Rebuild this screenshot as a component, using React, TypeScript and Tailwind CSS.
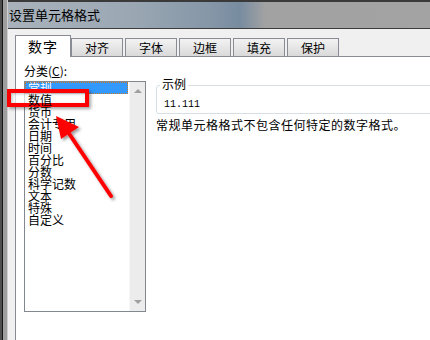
import React from "react";

const items = ["常规", "数值", "货币", "会计专用", "日期", "时间", "百分比", "分数", "科学记数", "文本", "特殊", "自定义"];
const tabs = ["对齐", "字体", "边框", "填充", "保护"];

export default function App() {
  return (
    <div className="relative w-[430px] h-[340px] overflow-hidden flex bg-[#f0f0f0] font-['Noto_Sans_CJK_SC',sans-serif] text-black">
      {/* left window frame */}
      <div className="flex h-full shrink-0">
        <div className="w-[2px] h-full bg-[#4e4e4e]" />
        <div className="w-[1px] h-full bg-[#141414]" />
        <div className="w-[4px] h-full bg-[#9e9e9e]" />
        <div className="w-[1px] h-full bg-[#cfcfcf]" />
      </div>
      <div className="flex-1 flex flex-col min-w-0">
        {/* title bar */}
        <div className="h-[29px] shrink-0 border-t-2 border-t-[#3a3a3a] border-b border-b-[#3c3c3c] bg-[linear-gradient(to_right,#a9b2bb_0%,#9aa7b3_30%,#8596a7_48%,#788ca0_55%,#a2a2a2_61%,#a3a3a3_100%)] flex items-center pl-[1px]">
          <span className="text-[13px] leading-[14px] mt-[-1px]">设置单元格格式</span>
        </div>
        {/* body */}
        <div className="flex-1 flex flex-col pl-[7px] pt-[6px] min-h-0">
          {/* tabs */}
          <div className="h-[21px] flex items-end shrink-0">
            <div className="relative z-10 w-[56px] h-[22px] -mb-[1px] bg-white border border-b-0 border-[#898c95] flex items-start justify-center pt-[3px]">
              <span className="text-[14px] leading-[15px] tracking-[1px]">数字</span>
            </div>
            {tabs.map((t, i) => (
              <div
                key={t}
                className={`${i === 0 ? "ml-[0px]" : "ml-[2px]"} w-[52px] h-[18px] border border-b-0 border-[#898c95] bg-[linear-gradient(to_bottom,#f3f3f3,#e6e6e6_50%,#d9d9d9)] flex items-center justify-center`}
              >
                <span className="text-[12px] leading-[12px] mt-[1px]">{t}</span>
              </div>
            ))}
          </div>
          {/* panel */}
          <div className="flex-1 bg-white border-l border-t border-[#898c95] flex pl-[8px] pt-[7px] gap-[10px]">
            {/* left column */}
            <div className="flex flex-col w-[122px] shrink-0">
              <div className="text-[12px] leading-[14px] h-[14px]">
                分类(<span className="underline underline-offset-1">C</span>):
              </div>
              <div className="mt-[3px] w-[122px] h-[231px] border border-[#828790] flex">
                <div className="flex-1 flex flex-col pt-0">
                  {items.map((it, i) => (
                    <div
                      key={it}
                      className={
                        i === 0
                          ? "h-[12px] leading-[12px] text-[12px] bg-[#3399ff] text-white pl-[3px] outline outline-1 outline-dotted outline-[#c87a2a] -outline-offset-1 mr-[1px]"
                          : i === 1
                          ? "relative z-20 h-[12px] leading-[12px] text-[12px] pl-[3px] whitespace-nowrap"
                          : "h-[12px] leading-[12px] text-[12px] pl-[3px] whitespace-nowrap"
                      }
                    >
                      {it}
                    </div>
                  ))}
                </div>
                <div className="w-[16px] h-full bg-[#ececec] border-l border-[#f6f6f6] flex flex-col items-center justify-between py-[7px]">
                  <div className="w-0 h-0 border-l-[4px] border-r-[4px] border-b-[4px] border-l-transparent border-r-transparent border-b-[#a0a0a0]" />
                  <div className="w-0 h-0 border-l-[4px] border-r-[4px] border-t-[4px] border-l-transparent border-r-transparent border-t-[#a0a0a0]" />
                </div>
              </div>
            </div>
            {/* right column */}
            <div className="flex flex-col flex-1 min-w-0">
              <div className="relative mt-[21px] w-[300px] h-[29px] border border-[#d5dfe5] rounded-[3px]">
                <span className="absolute -top-[9px] left-[3px] bg-white px-[2px] text-[12px] leading-[14px]">示例</span>
                <div className="absolute top-[13px] left-[7px] font-['Liberation_Mono',monospace] text-[10px] leading-[11px]">11.111</div>
              </div>
              <div className="mt-[4px] text-[12px] leading-[14px] tracking-[0.5px] whitespace-nowrap">
                常规单元格格式不包含任何特定的数字格式。
              </div>
            </div>
          </div>
        </div>
      </div>

      {/* red annotation rectangle */}
      <div className="absolute z-10 left-[7px] top-[89px] w-[82px] h-[18px] border-[4px] border-[#ff0000] bg-white/70 shadow-[2px_2px_3px_rgba(0,0,0,0.35),inset_1px_1px_3px_rgba(0,0,0,0.25)]" />

      {/* red arrow */}
      <svg className="absolute z-30 left-0 top-0" width="430" height="340" viewBox="0 0 430 340">
        <defs>
          <filter id="sh" x="-20%" y="-20%" width="140%" height="140%">
            <feDropShadow dx="2" dy="2" stdDeviation="1.5" floodColor="#000" floodOpacity="0.4" />
          </filter>
        </defs>
        <g filter="url(#sh)">
          <line x1="111" y1="196" x2="68" y2="132" stroke="#ff0000" strokeWidth="4" strokeLinecap="round" />
          <polygon points="56,116 61,139 79,127" fill="#ff0000" />
        </g>
      </svg>
    </div>
  );
}
